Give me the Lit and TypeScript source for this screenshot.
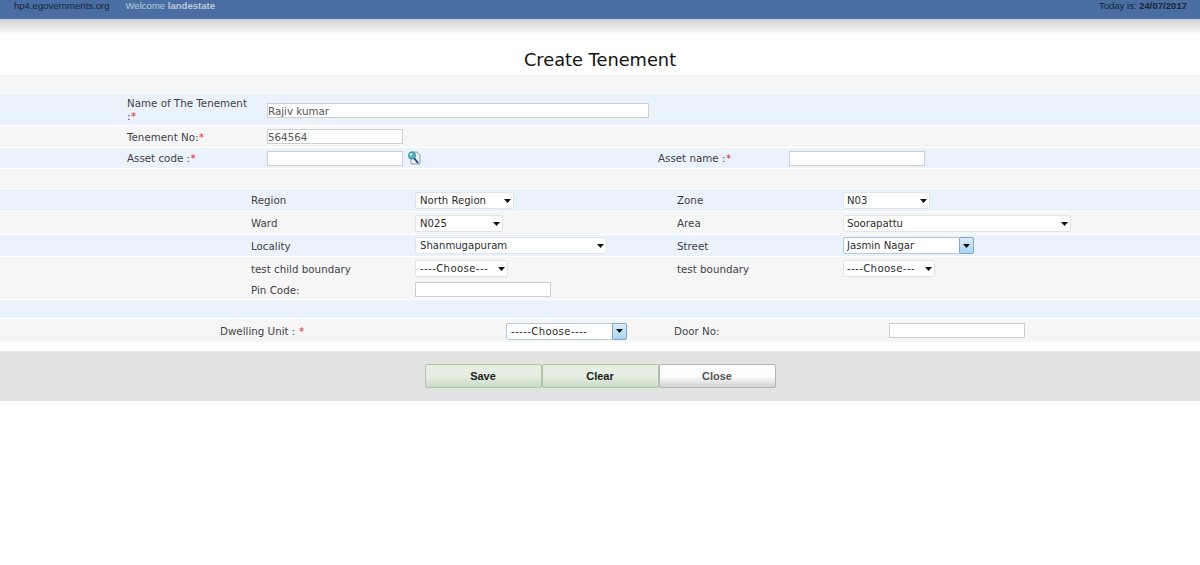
import { LitElement, html, css, svg } from 'lit';
import { customElement } from 'lit/decorators.js';

const arrow = svg`<svg class="tri" width="7" height="4" viewBox="0 0 7 4"><path d="M0 0h7L3.5 4z" fill="#111"/></svg>`;

@customElement('app-root')
export class AppRoot extends LitElement {
  static styles = css`
    :host {
      display: block;
      min-height: 565px;
      background: #fff;
      font-family: 'DejaVu Sans', Verdana, sans-serif;
      font-size: 10.3px;
      color: #3f3f46;
    }
    .top {
      height: 11px;
      display: flex;
      align-items: center;
      padding: 0 13px 8px 14px;
      background: #4a6ea3;
      border-bottom: 1px solid #c9d2df;
      box-sizing: content-box;
      font-family: 'Liberation Sans', Arial, sans-serif;
      font-size: 9.55px;
      color: #1a2433;
    }
    .welcome { margin-left: 16px; color: #bcc8da; }
    .today { margin-left: auto; }
    .fade {
      height: 15px;
      background: linear-gradient(#d2d2d2, #fff);
    }
    h1 {
      margin: 0;
      height: 40px;
      padding-top: 15px;
      box-sizing: border-box;
      line-height: 20px;
      text-align: center;
      font-size: 17.8px;
      font-weight: 400;
      color: #111;
    }
    .row {
      display: grid;
      align-items: center;
      margin-bottom: 1px;
      background: #f6f6f6;
    }
    .blue { background: #eaf2fb; }
    .main { grid-template-columns: 140px 391px 131px auto; padding-left: 127px; }
    .sub { grid-template-columns: 164px 262px 166px auto; padding-left: 251px; }
    .sub > :nth-child(4) select { padding-left: 3px; }
    .last { grid-template-columns: 286px 168px 215px auto; padding-left: 220px; }
    .last .sel { margin-top: 1px; }
    .name-label { line-height: 13px; padding-top: 1px; }
    .name-input { margin-top: 2px; }
    .req { color: #d33; margin-left: 0.5px; }
    .cell { display: flex; align-items: center; }
    input {
      box-sizing: border-box;
      height: 15px;
      width: 136px;
      padding: 0;
      border: 1px solid #cdd0d2;
      border-radius: 0;
      background: #fff;
      font: inherit;
      color: #555;
    }
    .wide { width: 382px; }
    .sel {
      position: relative;
      display: block;
      box-sizing: border-box;
      height: 17px;
      border: 1px solid #e0e4e9;
      border-radius: 2px;
      background: #fff;
    }
    .sel select {
      appearance: none;
      display: block;
      width: 100%;
      height: 100%;
      border: 0;
      padding: 0 0 0 4px;
      background: transparent;
      font: inherit;
      font-size: 10.1px;
      color: #2c2c2c;
    }
    .sel.choose select { letter-spacing: 0.4px; }
    .tri { position: absolute; right: 2.5px; top: 6px; pointer-events: none; }
    .focus { border-color: #b4c9dc; }
    .btn-arrow {
      position: absolute;
      right: -1px;
      top: -1px;
      bottom: -1px;
      width: 15px;
      display: flex;
      align-items: center;
      justify-content: center;
      border: 1px solid #7fa8cc;
      border-radius: 2px;
      box-sizing: border-box;
      background: linear-gradient(#dceefb, #a9d3f2);
    }
    .btn-arrow .tri { position: static; }
    .bar {
      margin-top: 9px;
      height: 50px;
      display: flex;
      justify-content: center;
      align-items: flex-start;
      padding-top: 12px;
      box-sizing: border-box;
      background: #e2e2e2;
      border-top: 1px solid #ececec;
    }
    button {
      width: 117px;
      height: 24px;
      padding: 0;
      border: 1px solid #aec6a9;
      border-radius: 2px;
      background: linear-gradient(#e6eee2 0 50%, #c9dcc4);
      font-family: 'Liberation Sans', Arial, sans-serif;
      font-size: 11px;
      font-weight: 700;
      color: #222;
    }
    button.plain {
      border-color: #b5b5b5;
      background: linear-gradient(#fdfdfd 0 50%, #d2d2d2);
      color: #555;
    }
    .find { margin-left: 4px; display: block; }
  `;

  private sel(text: string, width: number, focus = false) {
    const choose = text.includes('Choose');
    return html`<label class="sel ${focus ? 'focus' : ''} ${choose ? 'choose' : ''}" style="width:${width}px">
      <select><option>${text}</option></select>
      ${focus ? html`<span class="btn-arrow">${arrow}</span>` : arrow}
    </label>`;
  }

  render() {
    return html`
      <div class="top">
        <span>hp4.egovernments.org</span>
        <span class="welcome">Welcome <b>landestate</b></span>
        <span class="today">Today is: <b>24/07/2017</b></span>
      </div>
      <div class="fade"></div>
      <h1>Create Tenement</h1>

      <div class="row" style="height:18px"></div>
      <div class="row main blue" style="height:31px">
        <div class="name-label">Name of The Tenement<br />:<span class="req">*</span></div>
        <input class="wide name-input" .value=${'Rajiv kumar'} />
      </div>
      <div class="row main" style="height:21px">
        <div>Tenement No:<span class="req">*</span></div>
        <input .value=${'564564'} />
      </div>
      <div class="row main blue" style="height:20px">
        <div>Asset code :<span class="req">*</span></div>
        <div class="cell">
          <input />
          <svg class="find" width="14" height="14" viewBox="0 0 14 14">
            <path d="M4 1h6l3 3v9H4z" fill="#eef1f6" stroke="#7d8794" stroke-width=".8"/>
            <path d="M7 7l4 5" stroke="#1c3f9e" stroke-width="2"/>
            <circle cx="5" cy="4.5" r="3.6" fill="#4fb7c4" stroke="#33737f" stroke-width=".7"/>
            <circle cx="4" cy="3.4" r="1.3" fill="#c9f0f2"/>
          </svg>
        </div>
        <div>Asset name :<span class="req">*</span></div>
        <input />
      </div>
      <div class="row" style="height:19px"></div>

      <div class="row sub blue" style="height:22px">
        <div>Region</div>${this.sel('North Region', 99)}
        <div>Zone</div>${this.sel('N03', 87)}
      </div>
      <div class="row sub" style="height:22px">
        <div>Ward</div>${this.sel('N025', 88)}
        <div>Area</div>${this.sel('Soorapattu', 228)}
      </div>
      <div class="row sub blue" style="height:21px">
        <div>Locality</div>${this.sel('Shanmugapuram', 192)}
        <div>Street</div>${this.sel('Jasmin Nagar', 131, true)}
      </div>
      <div class="row sub" style="height:42px;align-content:start;row-gap:5px;padding-top:3px;box-sizing:border-box">
        <div>test child boundary</div>${this.sel('----Choose---', 93)}
        <div>test boundary</div>${this.sel('----Choose---', 92)}
        <div>Pin Code:</div><input />
      </div>
      <div class="row blue" style="height:18px"></div>
      <div class="row last" style="height:23px;margin-bottom:0">
        <div>Dwelling Unit : <span class="req">*</span></div>
        ${this.sel('-----Choose----', 121, true)}
        <div>Door No:</div>
        <input />
      </div>

      <div class="bar">
        <button>Save</button>
        <button>Clear</button>
        <button class="plain">Close</button>
      </div>
    `;
  }
}
